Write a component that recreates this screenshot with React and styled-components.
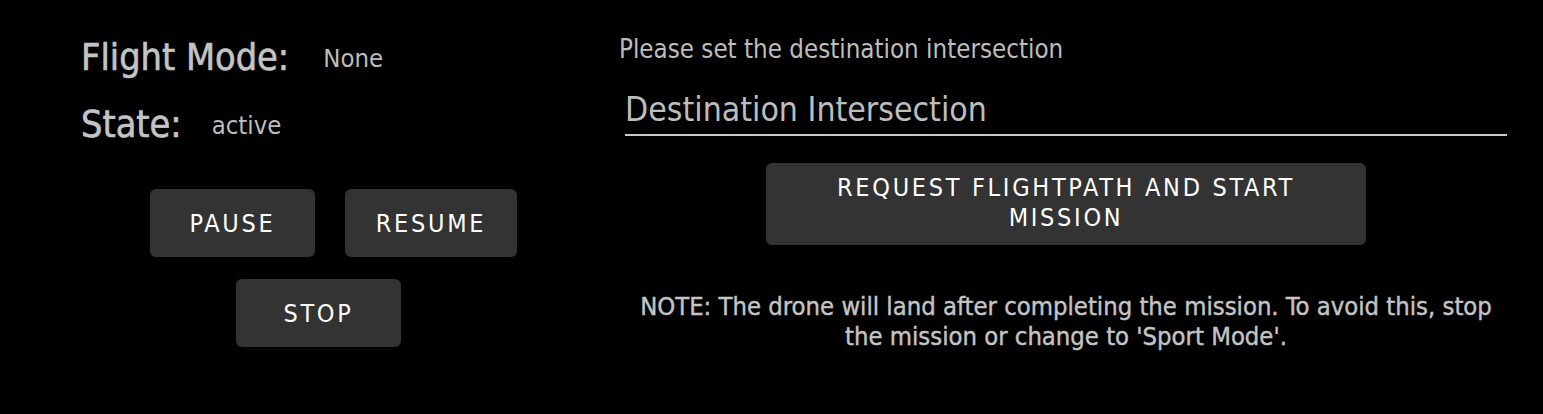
import React from 'react';
import styled, { createGlobalStyle } from 'styled-components';

const Global = createGlobalStyle`
  html, body {
    margin: 0;
    background: #000;
  }
  body {
    font-family: "DejaVu Sans Condensed", "DejaVu Sans", sans-serif;
    font-stretch: condensed;
  }
`;

const Page = styled.div`
  display: flex;
  width: 1543px;
  height: 414px;
  box-sizing: border-box;
  padding: 34px 36px 0 81px;
  background: #000;
`;

const Left = styled.div`
  width: 480px;
  display: flex;
  flex-direction: column;
  padding-top: 1px;
`;

const InfoList = styled.div`
  display: flex;
  flex-direction: column;
  gap: 22px;
`;

const InfoRow = styled.div`
  display: flex;
  align-items: center;
  height: 45px;
`;

const Label = styled.span`
  font-size: 37.5px;
  line-height: 45px;
  color: #c4c4c4;
  -webkit-text-stroke: 0.6px #c4c4c4;
  margin-right: ${p => p.gap}px;
`;

const Value = styled.span`
  font-size: 25.5px;
  line-height: 30px;
  color: #bdbdbd;
`;

const ButtonGrid = styled.div`
  display: flex;
  flex-direction: column;
  align-items: flex-start;
  gap: 22px;
  margin-top: 42px;
`;

const ButtonRow = styled.div`
  display: flex;
  gap: 30px;
  padding-left: ${p => p.indent}px;
`;

const Button = styled.button`
  width: ${p => p.w}px;
  height: 68px;
  border: none;
  border-radius: 6px;
  background: #333;
  color: #fff;
  font-family: inherit;
  font-stretch: condensed;
  font-size: 25px;
  letter-spacing: 2.7px;
  text-transform: uppercase;
`;

const Right = styled.div`
  flex: 1;
  display: flex;
  flex-direction: column;
  align-items: stretch;
  padding-left: 58px;
`;

const Prompt = styled.div`
  font-size: 25.7px;
  color: #bdbdbd;
  line-height: 30px;
`;

const Field = styled.div`
  margin: 26px 0 0 6px;
  border-bottom: 2px solid #c8c8c8;
  padding-bottom: 4px;
  font-size: 33.5px;
  color: #bdbdbd;
  line-height: 40px;
`;

const Center = styled.div`
  display: flex;
  flex-direction: column;
  align-items: center;
  margin-left: 6px;
`;

const BigButton = styled(Button)`
  width: 600px;
  height: 82px;
  margin-top: 27px;
  line-height: 30px;
  padding: 0 60px 2px;
`;

const Note = styled.p`
  margin: 46px 0 0;
  text-align: center;
  font-size: 25.4px;
  line-height: 30px;
  color: #c4c4c4;
  -webkit-text-stroke: 0.4px #c4c4c4;
  max-width: 880px;
`;

export default function App() {
  return (
    <>
      <Global />
      <Page>
        <Left>
          <InfoList>
            <InfoRow>
              <Label gap={34}>Flight Mode:</Label>
              <Value>None</Value>
            </InfoRow>
            <InfoRow>
              <Label gap={30}>State:</Label>
              <Value>active</Value>
            </InfoRow>
          </InfoList>
          <ButtonGrid>
            <ButtonRow indent={69}>
              <Button w={165}>Pause</Button>
              <Button w={172}>Resume</Button>
            </ButtonRow>
            <ButtonRow indent={155}>
              <Button w={165}>Stop</Button>
            </ButtonRow>
          </ButtonGrid>
        </Left>
        <Right>
          <Prompt>Please set the destination intersection</Prompt>
          <Field>Destination Intersection</Field>
          <Center>
            <BigButton>Request flightpath and start mission</BigButton>
            <Note>
              NOTE: The drone will land after completing the mission. To avoid this, stop the mission or change to 'Sport Mode'.
            </Note>
          </Center>
        </Right>
      </Page>
    </>
  );
}
